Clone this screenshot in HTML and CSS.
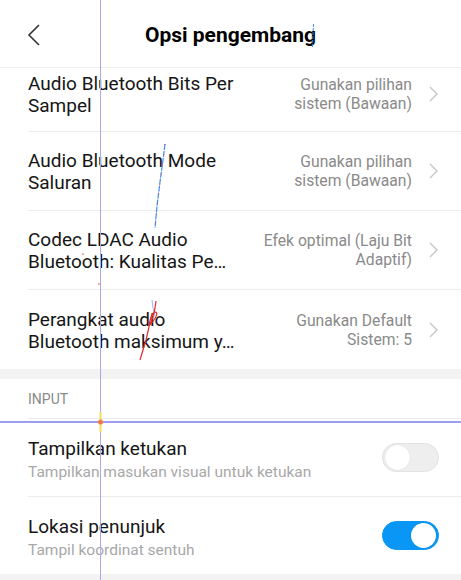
FILE: index.html
```html
<!DOCTYPE html>
<html lang="id">

<head>
  <meta charset="UTF-8">
  <title>Opsi pengembang</title>
  <link rel="stylesheet" href="styles.css">
</head>

<body>

  <header class="topbar">
    <div class="back">
      <svg width="14" height="24" viewBox="0 0 14 24">
        <path d="M12 2 L2 12 L12 22" fill="none" stroke="#333" stroke-width="1.6" />
      </svg>
    </div>
    <h1 class="title">Opsi pengembang</h1>
    <div></div>
  </header>

  <section class="group">
    <div class="row row-first">
      <div class="row-title">Audio Bluetooth Bits Per<br>Sampel</div>
      <div class="row-value">Gunakan pilihan<br>sistem (Bawaan)</div>
      <svg class="chevron" width="9" height="16" viewBox="0 0 9 16">
        <path d="M1 1 L8 8 L1 15" fill="none" stroke="#c6c6c6" stroke-width="1.4" />
      </svg>
    </div>
    <div class="row">
      <div class="row-title">Audio Bluetooth Mode<br>Saluran</div>
      <div class="row-value">Gunakan pilihan<br>sistem (Bawaan)</div>
      <svg class="chevron" width="9" height="16" viewBox="0 0 9 16">
        <path d="M1 1 L8 8 L1 15" fill="none" stroke="#c6c6c6" stroke-width="1.4" />
      </svg>
    </div>
    <div class="row">
      <div class="row-title">Codec LDAC Audio<br>Bluetooth: Kualitas Pe…</div>
      <div class="row-value">Efek optimal (Laju Bit<br>Adaptif)</div>
      <svg class="chevron" width="9" height="16" viewBox="0 0 9 16">
        <path d="M1 1 L8 8 L1 15" fill="none" stroke="#c6c6c6" stroke-width="1.4" />
      </svg>
    </div>
    <div class="row">
      <div class="row-title">Perangkat audio<br>Bluetooth maksimum y…</div>
      <div class="row-value">Gunakan Default<br>Sistem: 5</div>
      <svg class="chevron" width="9" height="16" viewBox="0 0 9 16">
        <path d="M1 1 L8 8 L1 15" fill="none" stroke="#c6c6c6" stroke-width="1.4" />
      </svg>
    </div>
  </section>

  <section class="group">
    <div class="group-label">INPUT</div>
    <div class="row row-switch">
      <div class="row-text">
        <div class="row-title">Tampilkan ketukan</div>
        <div class="row-sub">Tampilkan masukan visual untuk ketukan</div>
      </div>
      <div class="switch"><span class="knob"></span></div>
    </div>
    <div class="row row-switch">
      <div class="row-text">
        <div class="row-title">Lokasi penunjuk</div>
        <div class="row-sub">Tampil koordinat sentuh</div>
      </div>
      <div class="switch on"><span class="knob"></span></div>
    </div>
  </section>

  <!-- jejak lokasi penunjuk di atas layar -->
  <svg class="pointer-trace" width="461" height="580" viewBox="0 0 461 580">
    <line x1="100.5" y1="0" x2="100.5" y2="580" stroke="#a9a9ee" stroke-width="1" />
    <line x1="0" y1="422" x2="461" y2="422" stroke="#9c9cf0" stroke-width="2" />
    <line x1="100.5" y1="412" x2="100.5" y2="432" stroke="#f5dc5a" stroke-width="2" />
    <circle cx="100.5" cy="422" r="2.5" fill="#f07a4a" />
    <polyline points="313.5,24 313,34 312.5,48" fill="none" stroke="#3a8cf0" stroke-width="1" stroke-dasharray="3 1" />
    <polyline points="165,144 163,160 160,182 157,206 155,228" fill="none" stroke="#3d8ef0" stroke-width="1.2" stroke-dasharray="6 1" />
    <polyline points="165,144 163,160 160,182 157,206 155,228" fill="none" stroke="#e84040" stroke-width="1" stroke-dasharray="1 9" />
    <polyline points="152,300 153,308 155,316" fill="none" stroke="#9ab8f0" stroke-width="1" />
    <path d="M156,301 C155,310 153,318 150,325 C156,318 159,312 155,312 C151,313 150,320 149,327 L146,340 L140,360" fill="none" stroke="#e82828" stroke-width="1.2" />
    <circle cx="83" cy="254" r="0.8" fill="#e84040" />
    <circle cx="99" cy="284" r="0.8" fill="#e84040" />
  </svg>

</body>

</html>
```

FILE: styles.css
```css
body {
  margin: 0;
  width: 461px;
  height: 580px;
  overflow: hidden;
  position: relative;
  font-family: Roboto, 'Noto Sans', sans-serif;
  background-color: #f3f3f3;
  color: #111;
}

.topbar {
  height: 67px;
  display: grid;
  grid-template-columns: 1fr auto 1fr;
  align-items: center;
  background: #fff;
  border-bottom: 1px solid #efefef;
}

.back {
  padding-left: 27px;
  padding-top: 2px;
  display: flex;
}

.title {
  margin: 0;
  font-size: 21px;
  font-weight: 700;
  color: #000;
  padding-top: 2px;
}

.group {
  background: #fff;
  margin-bottom: 10px;
}

.row {
  display: flex;
  align-items: center;
  height: 78px;
  margin-left: 28px;
  padding-right: 23px;
  border-bottom: 1px solid #ececec;
}

.row:last-child {
  border-bottom: none;
  height: 79px;
}

.row-first {
  height: 64px;
  padding-bottom: 12px;
  box-sizing: border-box;
}

.row-title {
  flex: 1;
  font-size: 19px;
  line-height: 22px;
  color: #151515;
  padding-top: 2px;
}

.row-value {
  text-align: right;
  font-size: 15.7px;
  line-height: 19px;
  color: #8a8a8a;
  margin-right: 17px;
}

.chevron {
  flex-shrink: 0;
}

.group-label {
  height: 39px;
  display: flex;
  align-items: center;
  margin-left: 28px;
  font-size: 14px;
  color: #8a8a8a;
  border-bottom: 1px solid #ececec;
}

.row-switch {
  height: 77px;
  padding-right: 22px;
}

.row-switch:last-child {
  height: 77px;
}

.row-text {
  flex: 1;
  padding-top: 2px;
}

.row-sub {
  font-size: 15.5px;
  line-height: 20px;
  color: #a8a8a8;
  margin-top: 2px;
}

.switch {
  width: 57px;
  height: 29px;
  border-radius: 15px;
  box-sizing: border-box;
  background: #eeeeee;
  border: 1px solid #e2e2e2;
  display: flex;
  align-items: center;
  padding: 0 2px;
}

.knob {
  width: 25px;
  height: 25px;
  border-radius: 50%;
  background: #fff;
  box-shadow: 0 0 1px rgba(0, 0, 0, 0.15);
}

.switch.on {
  background: #0a96f5;
  border-color: #0a96f5;
  justify-content: flex-end;
}

.pointer-trace {
  position: absolute;
  top: 0;
  left: 0;
  pointer-events: none;
}
```
